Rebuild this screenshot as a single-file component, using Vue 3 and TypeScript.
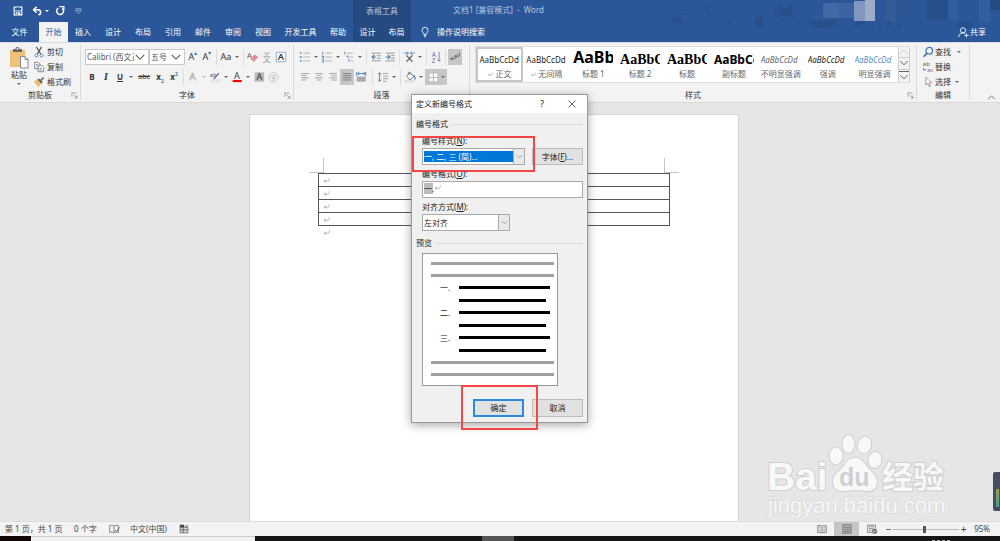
<script setup lang="ts">
import { h, ref } from 'vue'

const art: Record<string, string> = {
  save: '<path d="M2.500 2.500h9v9h-9z" fill="none" stroke="#fff" stroke-width="1.300"/><path d="M4 3h6v3.500H4z" fill="#2b579a"/><path d="M3 6.800h8" stroke="#fff"/><path d="M4.500 8.500h5v3h-5z" fill="#fff"/><path d="M5.500 9.500h1.500v2H5.500z" fill="#2b579a"/>',
  undo: '<path d="M6.500 2L3 5.500 6.500 9" fill="none" stroke="#fff" stroke-width="1.800"/><path d="M3 5.500h5c4 0 4.500 5.500.500 6" fill="none" stroke="#fff" stroke-width="1.800"/>',
  redo: '<path d="M5 3.600a4 4 0 1 0 4.600.300" fill="none" stroke="#fff" stroke-width="1.700"/><path d="M6.500 2h5v4.500" fill="none" stroke="#fff" stroke-width="1.500"/>',
  custom: '<path d="M4 4.500h7" stroke="#a8bbd8"/><path d="M4 6.500h7L7.500 10z" fill="none" stroke="#a8bbd8" stroke-width=".8"/>',
  bulb: '<path d="M5.300 9.500C5.300 8 3.500 7.300 3.500 5a3.500 3.500 0 0 1 7 0c0 2.300-1.800 3-1.800 4.500zM5.500 11h3M6 12.500h2" fill="none" stroke="#fff"/>',
  user: '<circle cx="7" cy="5" r="3" fill="none" stroke="#fff"/><path d="M2 13c0-3 2-5 5-5 1 0 1.800.200 2.500.600M8.500 11h5M11 8.500v5" fill="none" stroke="#fff"/>',
  cut: '<path d="M4 1l5 8.500M10 1L5 9.500" stroke="#555" stroke-width="1.300"/><circle cx="4" cy="11" r="1.800" fill="none" stroke="#4a83bd"/><circle cx="10" cy="11" r="1.800" fill="none" stroke="#4a83bd"/>',
  copy: '<path d="M2 1.500h4l2 2V9H2z" fill="#fff" stroke="#777"/><path d="M6 5h4l2.500 2.500v5H6z" fill="#fff" stroke="#777"/><path d="M3.500 4h2M3.500 6h2M7.500 8.500h3M7.500 10.500h3" stroke="#4a83bd"/>',
  brush: '<path d="M1 6l4-2 4.500 5L6 13z" fill="#edba6c"/><path d="M5 4l2-1 4.500 4-2 2z" fill="#666"/><path d="M9 5l3.500-3" stroke="#666" stroke-width="2"/>',
  eraser: '<text x="0" y="8" font-size="9" fill="#555">A</text><path d="M4 9l5-5 4 3-5 5.500z" fill="#e77f91"/><path d="M4 9l2-2 4 3.300-2 2.200z" fill="#d99"/>',
  pinyin: '<path d="M4 1.500l1.500 2.500 1.500-2.500 1.500 2.500L10 1.500" fill="none" stroke="#999" stroke-width=".8"/><text x="2" y="12.500" font-size="9.500" fill="#999">文</text>',
  boxa: '<path d="M1.500 1.500h11v11h-11z" fill="#fff" stroke="#7fa3cf"/><text x="3.200" y="11" font-size="11" font-weight="600" fill="#333">A</text>',
  outline: '<text x="3" y="11" font-size="11" fill="#fff" stroke="#b5b5b5" stroke-width=".8">A</text>',
  marker: '<text x="1" y="6.500" font-size="7" fill="#555">ab</text><path d="M5 9l6-7 1 1-6 7z" fill="#666"/><path d="M2 10.500h10v2H2z" fill="#fff" stroke="#bbb" stroke-width=".6"/>',
  color: '<text x="3.500" y="9" font-size="10.500" fill="#444">A</text><path d="M2 10.500h10.500V13H2z" fill="#f00"/>',
  shadea: '<path d="M2 1.500h11v11H2z" fill="#b8b8b8"/><text x="4" y="11" font-size="10.500" fill="#333">A</text>',
  circle: '<circle cx="7.500" cy="7.500" r="5.500" fill="none" stroke="#c8bcc8"/><text x="4.300" y="10" font-size="6.500" fill="#b9aeb9">字</text>',
  bullets: '<path d="M1 2.500h2M1 7h2M1 11.500h2" stroke="#3c78b5" stroke-width="1.600"/><path d="M5 2.500h8M5 7h8M5 11.500h8" stroke="#aaa"/>',
  numbers: '<path d="M2 1v3M1 6h2v2H1M1 10h2v3H1" fill="none" stroke="#3c78b5"/><path d="M5 2.500h8M5 7h8M5 11.500h8" stroke="#aaa"/>',
  multi: '<path d="M2 1v3M4 6h2v2M7 9.500v3" fill="none" stroke="#3c78b5"/><path d="M4.500 2.500H12M8 7h4M9 11.500h3" stroke="#aaa"/>',
  outdent: '<path d="M2 2.500h10.500M8 5.500h4.500M8 8.500h4.500M2 11.500h10.500" stroke="#888"/><path d="M7 7H3M5 4.500L2.500 7 5 9.500" fill="none" stroke="#3c78b5" stroke-width="1.200"/>',
  indent: '<path d="M2 2.500h10.500M8 5.500h4.500M8 8.500h4.500M2 11.500h10.500" stroke="#888"/><path d="M2 7h4M4.500 4.500L7 7 4.500 9.500" fill="none" stroke="#3c78b5" stroke-width="1.200"/>',
  asian: '<path d="M4 5l7 7.500M11 5l-7 7.500" fill="none" stroke="#555" stroke-width="1.400"/><path d="M1 2.500h5M9 2.500h5M4.500 .8L6.500 2.500 4.500 4.200M10.500 .8l-2 1.700 2 1.700" fill="none" stroke="#3c78b5"/>',
  sort: '<text x="2" y="6.500" font-size="7.500" fill="#3c78b5">A</text><text x="2" y="13.500" font-size="7.500" fill="#8a53a8">Z</text><path d="M10.500 1v11M8.500 10l2 2 2-2" fill="none" stroke="#777"/>',
  marks: '<path d="M12 2v4H7M9 4L7 6l2 2M7 6.500v2.500H2M4 7L2 9l2 2" fill="none" stroke="#555"/>',
  left: '<path d="M2.500 3h9M2.500 5.500h6M2.500 8h9M2.500 10.500h6" stroke="#999"/>',
  center: '<path d="M2.500 3h9M4.500 5.500h5M2.500 8h9M4.500 10.500h5" stroke="#999"/>',
  right: '<path d="M2.500 3h9M5.500 5.500h6M2.500 8h9M5.500 10.500h6" stroke="#999"/>',
  justify: '<path d="M2 3h10M2 5.500h10M2 8h10M2 10.500h10" stroke="#777"/>',
  distrib: '<path d="M2 1v5M12.500 1v5M3 3h9M5 1.500L3 3l2 1.500M10 1.500L12 3l-2 1.500" fill="none" stroke="#3c78b5"/><path d="M2 6.500h10.500v6H2z" fill="#aaa"/>',
  spacing: '<path d="M3 2v10M1 4l2-2 2 2M1 10l2 2 2-2" fill="none" stroke="#3c78b5"/><path d="M7 3h6M7 6h6M7 9h6M7 12h4" stroke="#999"/>',
  bucket: '<path d="M3 6l4-4 4 4-4 4.500z" fill="#fff" stroke="#666"/><path d="M5 4V1.500h2V5" fill="none" stroke="#666" stroke-width=".8"/><path d="M11 5c2 2 2 4 1.500 5" stroke="#4a83bd" fill="none" stroke-width="1.500"/><path d="M1.500 11h10v2h-10z" fill="#fff" stroke="#bbb" stroke-width=".7"/>',
  border: '<path d="M2.500 2.500h10v10h-10z" fill="#fff" stroke="#aaa" stroke-width=".6"/><path d="M7.500 2.500v10M2.500 7.500h10" stroke="#aaa"/>',
  find: '<circle cx="8.500" cy="5.500" r="3.800" fill="none" stroke="#3c78b5" stroke-width="1.500"/><path d="M5.500 8.500L2 12.500" stroke="#3c78b5" stroke-width="2"/>',
  replace: '<text x="1" y="5.500" font-size="7" fill="#555">ab</text><text x="6" y="12.500" font-size="7" fill="#8a53a8">ac</text><path d="M2 8v2.500h3" fill="none" stroke="#3c78b5"/>',
  select: '<path d="M4.500 1.500v9l2.200-2 1.800 4 1.500-.700-1.700-3.800h3z" fill="#fff" stroke="#777" stroke-width=".8"/>',
  spell: '<path d="M2 3c2-.500 4-.500 5 .500 1-1 3-1 5-.500v8c-2-.500-4-.500-5 .500-1-1-3-1-5-.500zM7 3.500V11" fill="none" stroke="#777"/><path d="M8 8l2 2 3.500-5" stroke="#555" fill="none"/>',
  macro: '<path d="M2.500 5h9v6.500h-9z" fill="#ddd" stroke="#666"/><path d="M2 2h5v3H2z" fill="#444"/><path d="M8 3.500h4M2.500 8h9M6 5v6" stroke="#555"/>',
  read: '<path d="M2 3h4l1 1 1-1h4v8H8l-1 1-1-1H2zM7 4v8" fill="none" stroke="#777"/><path d="M3 5h2.500M3 7h2.500M3 9h2.500M8.500 5H11M8.500 7H11M8.500 9H11" stroke="#999"/>',
  print: '<path d="M2 2h10v10H2z" fill="#b0b0b0" stroke="#777"/><path d="M3.500 5h7M3.500 7.500h7M3.500 10h7" stroke="#777"/>',
  web: '<path d="M7 11H2V2.500h9V6" fill="none" stroke="#777"/><path d="M3.500 4.500h6M3.500 6.500h5M3.500 8.500h3" stroke="#888"/><circle cx="10" cy="9.500" r="3" fill="#777"/><path d="M8 9.500l2 1 2-2" fill="none" stroke="#fff" stroke-width=".7"/>',
  enter: '<path d="M11 3.500c2 3-1 4.500-3 4.500H3.500M6 5.500L3.500 8 6 10.500" fill="none" stroke="#888"/>',
  launch: '<path d="M3 9V3h7M6 6l4.500 4.500M11 7v4H7" fill="none" stroke="#777"/>',
  up: '<path d="M2 9.500l5-5 5 5" fill="none" stroke="currentColor" stroke-width="1.200"/>',
  down: '<path d="M2 4.500l5 5 5-5" fill="none" stroke="currentColor" stroke-width="1.200"/>',
  close: '<path d="M3 3l8 8M11 3l-8 8" stroke="#444"/>',
}
const Icon = (p: { name: string }) =>
  h('svg', { class: 'icon', viewBox: '0 0 14 14', 'aria-hidden': 'true', innerHTML: art[p.name] })
Icon.props = ['name']

const tabs = ['开始', '插入', '设计', '布局', '引用', '邮件', '审阅', '视图']
const active = ref('开始')
const styles = [
  { n: '正文', s: 'AaBbCcDd', k: 'plain', m: true },
  { n: '无间隔', s: 'AaBbCcDd', k: 'plain', m: true },
  { n: '标题 1', s: 'AaBb', k: 'h1' },
  { n: '标题 2', s: 'AaBbC', k: 'h2' },
  { n: '标题', s: 'AaBbC', k: 'h2' },
  { n: '副标题', s: 'AaBbCc', k: 'sub' },
  { n: '不明显强调', s: 'AaBbCcDd', k: 'subtle' },
  { n: '强调', s: 'AaBbCcDd', k: 'em' },
  { n: '明显强调', s: 'AaBbCcDd', k: 'azure' },
]
const preview = ['grey', 'grey', '一', 'short', '二', 'short', '三', 'short', 'grey', 'grey']
const format = ref('一.')
const zoom = ref(95)
</script>

<template>
  <div class="app">
    <header class="head">
      <svg class="deco" viewBox="0 0 340 42" aria-hidden="true">
        <g fill="#264d88" opacity=".75">
          <ellipse cx="17" cy="20" rx="5" ry="3" /><path d="M7 14l6 5M22 15l6-1M8 23l6-3M21 22l4 3" stroke="#264d88" />
          <circle cx="47" cy="7" r="2.500" /><circle cx="70" cy="22" r="1.800" />
          <path d="M95 25v-4a4.500 4.500 0 0 1 9 0v4l-2 3-1-3-1.500 4-1.500-4-2 3z" />
          <ellipse cx="125" cy="12" rx="7" ry="4" /><path d="M113 13l8-4M119 3l3 6M132 2l-3 7M136 13l-8-2M116 18l6-4M134 18l-5-4" stroke="#264d88" stroke-width="2" />
          <path d="M147 19q16 4 29 0 3 2-1 5-4 4-14 4-12-1-14-9z" /><path d="M194 23l14-5-4 6-10 3z" />
          <path d="M217 25l3-3 2 5zM226 22h4l-1 6zM236 22l6 4-3 2z" /><ellipse cx="305" cy="25" rx="9" ry="4" />
        </g>
        <path d="M163 3h15v15h-15z" fill="#4268a6" /><path d="M178 3h16v15h-16z" fill="#3c63a2" />
        <path d="M194 1h11v20h-11z" fill="#8296bf" /><path d="M205 0h10v21h-10z" fill="#9eacca" />
        <path d="M225 0h11v21h-11z" fill="#345c94" /><path d="M236 0h20v19h-20z" fill="#2d5694" /><path d="M267 0h21v20h-21z" fill="#274f8a" />
        <path d="M288 0h10v20h-10zM319 0h11v22h-11z" fill="#315e9f" /><path d="M330 0h10v10h-10z" fill="#254b82" />
      </svg>
      <div class="title-row">
        <div class="quick">
          <button aria-label="保存"><Icon name="save" /></button>
          <button aria-label="撤消"><Icon name="undo" /></button><i class="ar light"></i>
          <button aria-label="恢复"><Icon name="redo" /></button>
          <button class="more" aria-label="自定义"><Icon name="custom" /></button>
        </div>
        <div class="ctx-title">表格工具</div>
        <div class="doc-title">文档1 [兼容模式]&nbsp; -&nbsp; Word</div>
      </div>
      <nav class="tabs">
        <button class="file">文件</button>
        <button v-for="t in tabs" :key="t" :class="{ on: t === active }" @click="active = t">{{ t }}</button>
        <button class="dev">开发工具</button>
        <button>帮助</button>
        <div class="ctx"><button>设计</button><button>布局</button></div>
        <button class="tell"><Icon name="bulb" />操作说明搜索</button>
        <button class="share"><Icon name="user" />共享</button>
      </nav>
    </header>

    <section class="ribbon">
      <div class="group clip">
        <div class="body">
          <button class="paste">
            <svg viewBox="0 0 20 22" aria-hidden="true">
              <path d="M1 3h15v17H1z" fill="#edc178" /><path d="M4 2h2.500a2 2 0 0 1 4 0H13v3H4z" fill="#666" /><circle cx="8.500" cy="2" r=".9" fill="#fff" />
              <path d="M11.500 9.500h4.500l3 3v8.500h-7.500z" fill="#fff" stroke="#888" /><path d="M16 9.500v3h3" fill="none" stroke="#888" />
            </svg>
            <span>粘贴</span><i class="ar"></i>
          </button>
          <div class="list">
            <button><Icon name="cut" />剪切</button>
            <button><Icon name="copy" />复制</button>
            <button><Icon name="brush" />格式刷</button>
          </div>
        </div>
        <div class="cap">剪贴板<Icon name="launch" /></div>
      </div>

      <div class="group font">
        <div class="body rows">
          <div class="row">
            <label class="combo"><input value="Calibri (西文正文)" aria-label="字体" /><Icon name="down" /></label>
            <label class="combo size"><input value="五号" aria-label="字号" /><Icon name="down" /></label>
            <button class="b grow">A<sup>▴</sup></button><button class="b grow">A<sup>▾</sup></button><i class="sep"></i>
            <button class="b aa">Aa</button><i class="ar"></i><i class="sep"></i>
            <button class="b" aria-label="清除格式"><Icon name="eraser" /></button>
            <button class="b" aria-label="拼音指南"><Icon name="pinyin" /></button>
            <button class="b" aria-label="字符边框"><Icon name="boxa" /></button>
          </div>
          <div class="row">
            <button class="b"><b>B</b></button><button class="b serif"><b><em>I</em></b></button><button class="b"><b><u>U</u></b></button><i class="ar"></i>
            <button class="b abc"><s>abc</s></button>
            <button class="b x"><b>x<sub>2</sub></b></button><button class="b x"><b>x<sup>2</sup></b></button><i class="sep"></i>
            <button class="b" aria-label="文本效果"><Icon name="outline" /></button><i class="ar pale"></i>
            <button class="b" aria-label="突出显示"><Icon name="marker" /></button><i class="ar"></i>
            <button class="b" aria-label="字体颜色"><Icon name="color" /></button><i class="ar"></i>
            <button class="b" aria-label="字符底纹"><Icon name="shadea" /></button>
            <button class="b" aria-label="带圈字符"><Icon name="circle" /></button>
          </div>
        </div>
        <div class="cap">字体<Icon name="launch" /></div>
      </div>

      <div class="group para">
        <div class="body rows">
          <div class="row">
            <button class="b" aria-label="项目符号"><Icon name="bullets" /></button><i class="ar"></i>
            <button class="b" aria-label="编号"><Icon name="numbers" /></button><i class="ar"></i>
            <button class="b" aria-label="多级列表"><Icon name="multi" /></button><i class="ar"></i><i class="sep"></i>
            <button class="b" aria-label="减少缩进"><Icon name="outdent" /></button>
            <button class="b" aria-label="增加缩进"><Icon name="indent" /></button><i class="sep"></i>
            <button class="b" aria-label="中文版式"><Icon name="asian" /></button><i class="ar"></i><i class="sep"></i>
            <button class="b" aria-label="排序"><Icon name="sort" /></button><i class="sep"></i>
            <button class="b on" aria-label="显示编辑标记"><Icon name="marks" /></button>
          </div>
          <div class="row">
            <button class="b" aria-label="左对齐"><Icon name="left" /></button>
            <button class="b" aria-label="居中"><Icon name="center" /></button>
            <button class="b" aria-label="右对齐"><Icon name="right" /></button>
            <button class="b on" aria-label="两端对齐"><Icon name="justify" /></button>
            <button class="b" aria-label="分散对齐"><Icon name="distrib" /></button><i class="sep wide"></i>
            <button class="b" aria-label="行距"><Icon name="spacing" /></button><i class="ar"></i><i class="sep"></i>
            <button class="b" aria-label="底纹"><Icon name="bucket" /></button><i class="ar"></i>
            <button class="b on split" aria-label="边框"><Icon name="border" /><i class="ar"></i></button>
          </div>
        </div>
        <div class="cap">段落</div>
      </div>

      <div class="group styles">
        <div class="body">
          <div class="gallery">
            <button v-for="(s, i) in styles" :key="s.n" class="style" :class="{ sel: i === 0 }">
              <span class="sample" :class="s.k">{{ s.s }}</span>
              <span class="name"><Icon v-if="s.m" name="enter" />{{ s.n }}</span>
            </button>
            <div class="scroll">
              <button class="dim" aria-label="上一行"><Icon name="up" /></button>
              <button aria-label="下一行"><Icon name="down" /></button>
              <button class="all" aria-label="其他"><Icon name="down" /></button>
            </div>
          </div>
        </div>
        <div class="cap">样式<Icon name="launch" /></div>
      </div>

      <div class="group edit">
        <div class="body list">
          <button><Icon name="find" />查找<i class="ar far"></i></button>
          <button><Icon name="replace" />替换</button>
          <button><Icon name="select" />选择<i class="ar"></i></button>
        </div>
        <div class="cap">编辑</div>
      </div>
      <button class="collapse" aria-label="折叠功能区"><Icon name="up" /></button>
    </section>

    <main class="work">
      <article class="page">
        <div class="crops"><i></i><i></i></div>
        <table>
          <tbody><tr v-for="r in 4" :key="r"><td><Icon name="enter" /></td></tr></tbody>
        </table>
        <Icon name="enter" class="tail" />
      </article>
      <svg class="mark" viewBox="0 0 195 90" role="img" aria-label="Baidu 经验">
        <g fill="#f8f8f8" stroke="#cfcfcf" stroke-width="2" paint-order="stroke">
          <text x="7" y="60" class="bai">Bai</text>
          <ellipse cx="76" cy="26" rx="6.500" ry="8.500" /><ellipse cx="88.500" cy="14" rx="6" ry="9" />
          <ellipse cx="104.500" cy="15" rx="6.500" ry="8.500" transform="rotate(12 104.500 15)" /><ellipse cx="115" cy="30" rx="6.500" ry="8" transform="rotate(8 115 30)" />
          <path d="M95 28c8 0 10 7 14 11s8 7 8 13c0 7-5 9-10 9-5 0-7-1-12-1s-7 1-12 1c-6 0-10-3-10-9 0-7 5-10 9-14s5-10 13-10z" />
          <text x="122" y="58" class="jy">经验</text>
          <text x="8" y="83" class="url">jingyan.baidu.com</text>
        </g>
        <text x="79" y="56" class="du">du</text>
      </svg>
      <aside class="meter"><i></i></aside>
    </main>

    <footer class="status">
      <span class="pages">第 1 页，共 1 页</span><span class="words">0 个字</span>
      <Icon name="spell" /><span class="lang">中文(中国)</span><Icon name="macro" />
      <div class="views">
        <button aria-label="阅读视图"><Icon name="read" /></button>
        <button class="on" aria-label="页面视图"><Icon name="print" /></button>
        <button aria-label="Web 版式"><Icon name="web" /></button>
        <button class="pm">−</button>
        <input v-model="zoom" type="range" min="10" max="190" aria-label="缩放" />
        <button class="pm">+</button><span class="pct">{{ zoom }}%</span>
      </div>
    </footer>
    <div class="task"><i class="start"></i><i class="search"></i><i class="apps"></i><i class="cur"></i><i class="tray"></i></div>

    <form class="dialog" role="dialog" aria-labelledby="dlg" @submit.prevent>
      <div class="bar"><span id="dlg">定义新编号格式</span><button type="button" class="help">?</button><button type="button" aria-label="关闭"><Icon name="close" /></button></div>
      <div class="content">
        <div class="legend">编号格式</div>
        <label class="clipped first" for="ns"><span>编号样式(<u>N</u>):</span></label>
        <div class="line">
          <div class="pick blue"><select id="ns"><option>一, 二, 三 (简)...</option></select><span><Icon name="down" /></span></div>
          <button type="button" class="btn">字体(<u>F</u>)...</button>
        </div>
        <label class="clipped" for="nf"><span>编号格式(<u>O</u>):</span></label>
        <div class="field"><input id="nf" v-model="format" /><Icon name="enter" /></div>
        <label class="whole" for="al">对齐方式(<u>M</u>):</label>
        <div class="pick small"><select id="al"><option>左对齐</option></select><span><Icon name="down" /></span></div>
        <div class="legend second">预览</div>
        <div class="preview">
          <div v-for="(p, i) in preview" :key="i" class="pl" :class="p.length > 1 ? p : 'item'">
            <span v-if="p.length === 1">{{ p }}.</span><i></i>
          </div>
        </div>
        <div class="actions"><button class="btn ok">确定</button><button type="button" class="btn">取消</button></div>
      </div>
      <i class="ring top"></i><i class="ring bottom"></i>
    </form>
  </div>
</template>

<style>
html, body { margin: 0; }
</style>

<style scoped>
* { box-sizing: border-box; }
.app { position: relative; display: flex; flex-direction: column; min-height: 100vh; overflow: hidden; font: 8px/12px "Noto Sans", "Noto Sans CJK SC", sans-serif; color: #333; background: #e6e6e6; }
button, input, select { font: inherit; color: inherit; border: 0; padding: 0; margin: 0; background: none; border-radius: 0; min-width: 0; outline: 0; }
button { display: flex; align-items: center; justify-content: center; white-space: nowrap; }
.icon { display: block; width: 12px; height: 12px; flex: none; overflow: visible; }
.ar { width: 8px; flex: none; display: flex; justify-content: center; }
.ar::before { content: ""; border: 2px solid transparent; border-top-color: #666; border-bottom: 0; }
.light::before { border-top-color: #fff; }
.pale::before { border-top-color: #bbb; }

.head { position: relative; background: #2b579a; color: #fff; }
.deco { position: absolute; right: 0; top: 0; width: 340px; height: 42px; }
.title-row { display: flex; height: 22px; align-items: stretch; }
.quick { width: 353px; display: flex; align-items: center; padding-left: 12px; }
.quick button:nth-child(2) { margin-left: 7px; }
.quick .more { margin-left: 6px; }
.quick .ar + button { margin-left: 3px; }
.ctx-title { width: 58px; background: #254a80; color: #b5c4dc; display: flex; align-items: center; justify-content: center; }
.doc-title { margin-left: 42px; padding-top: 4px; color: #b5c4dc; }
.tabs { position: relative; display: flex; height: 20px; }
.tabs button { width: 30px; }
.tabs .file { width: 39px; }
.tabs .on { width: 29px; background: #f3f3f3; color: #2b579a; }
.tabs .dev { width: 45px; }
.ctx { display: flex; background: #254a80; }
.tabs .ctx button { width: 29px; }
.tabs .tell { width: auto; margin-left: 8px; gap: 6px; }
.tabs .share { width: auto; margin-left: auto; margin-right: 14px; gap: 1px; }

.ribbon { display: flex; height: 61px; background: #f3f3f3; border-top: 1px solid #d3dbe8; border-bottom: 1px solid #d8d8d8; position: relative; }
.group { position: relative; display: flex; flex-direction: column; flex: none; margin: 2px 0; border-right: 1px solid #dadada; }
.body { flex: 1; display: flex; min-height: 0; }
.cap { height: 11px; line-height: 11px; text-align: center; position: relative; flex: none; }
.cap .icon { position: absolute; right: 1px; top: 2px; width: 9px; height: 9px; }
.clip { width: 81px; }
.font { width: 213px; }
.para { width: 176px; }
.styles { width: 447px; }
.edit { width: 53px; }
.paste { flex-direction: column; width: 36px; padding-left: 2px; justify-content: flex-start; padding-top: 2px; }
.paste svg { width: 20px; height: 22px; flex: none; }
.paste .ar { margin-top: 2px; }
.list { display: flex; flex-direction: column; justify-content: flex-start; }
.list button { height: 15px; gap: 2px; justify-content: flex-start; }
.clip .list { margin-left: -3px; }
.edit .list { padding-left: 5px; }
.edit .list .icon { margin-right: -1px; }
.far { margin-left: 2px; }
.rows { flex-direction: column; padding: 4px 4px 0; gap: 4px; }
.row { display: flex; height: 16px; align-items: stretch; }
.row .ar { align-items: center; }
.b { width: 14px; flex: none; }
.on { background: #c6c6c6; }
.split { width: 22px; }
.split .icon { margin-left: 1px; }
.sep { width: 1px; margin: 0 2px; background: #ddd; flex: none; }
.wide { margin: 0 3px 0 4px; }
.grow { font-size: 9px; }
.grow sup { font-size: 6px; color: #3c78b5; line-height: 0; margin-top: -8px; }
.aa { font-size: 9px; }
.serif { font-family: "Liberation Serif", serif; font-size: 10px; }
.abc { width: 18px; font-size: 7px; }
.x sub, .x sup { font-size: 5px; color: #3c78b5; line-height: 0; }
.combo { display: flex; align-items: center; width: 64px; border: 1px solid #c8c8c8; background: #fff; color: #555; padding: 0 2px 0 1px; margin: 0; }
.combo input { flex: 1; width: 0; }
.size { width: 36px; margin-right: 1px; }
.styles .body { padding: 1px 6px 6px 5px; }
.gallery { display: flex; flex: 1; background: #fff; border: 1px solid #ddd; border-right: 0; }
.style { flex: 1 1 0; flex-direction: column; justify-content: space-between; overflow: hidden; padding: 0 3px 2px; }
.sel { border: 2px solid #c6c6c6; padding: 0 1px; }
.sample { height: 23px; line-height: 26px; width: 40px; overflow: hidden; text-align: left; color: #222; }
.sel .sample { line-height: 22px; height: 21px; }
.h1 { font-size: 16px; line-height: 20px; font-weight: 700; color: #000; }
.h2 { font: 700 14px/25px "Liberation Serif", serif; color: #000; }
.sub { font-size: 12px; line-height: 25px; font-weight: 700; color: #000; }
.subtle, .em, .azure { font-style: italic; }
.subtle { color: #666; }
.azure { color: #5b8bc9; }
.name { display: flex; align-items: center; gap: 1px; color: #666; line-height: 12px; }
.name .icon { width: 7px; height: 7px; }
.scroll { width: 12px; display: flex; flex-direction: column; background: #f3f3f3; border: 1px solid #ccc; border-width: 0 1px; }
.scroll button { flex: 1; border-bottom: 1px solid #ccc; color: #444; }
.scroll .icon { width: 10px; height: 10px; }
.scroll .all { border-top: 1px solid #666; border-bottom: 0; margin-top: 1px; }
.scroll .dim { color: #bbb; }
.collapse { margin: auto 4px 0 auto; height: 10px; color: #555; }
.collapse .icon { width: 9px; height: 9px; }

.work { position: relative; flex: 1; display: flex; justify-content: center; padding: 11px 12px 0 0; }
.page { width: 490px; background: #fff; border: 1px solid #d6d6d6; border-bottom: 0; padding: 43px 59px 0 59px; }
.crops { display: flex; justify-content: space-between; height: 15px; }
.crops i { width: 15px; border: 0 solid #c4c4c4; border-bottom-width: 1px; border-right-width: 1px; }
.crops i + i { border-right-width: 0; border-left-width: 1px; }
table { border-collapse: collapse; width: calc(100% - 18px); margin: 0 9px; }
td { height: 13px; padding: 0 3px; border: 1px solid #555; }
td .icon, .tail { width: 9px; height: 9px; }
.tail { margin: 2px 0 0 13px; }
.mark { position: absolute; right: 45px; bottom: 1px; width: 195px; height: 90px; }
.bai { font: 700 39px "Liberation Sans", sans-serif; }
.jy { font: 700 31px "Noto Sans CJK SC", sans-serif; }
.url { font: 22px "Liberation Sans", sans-serif; stroke: #d4d4d4; stroke-width: 1px; }
.du { font: 700 25px "Liberation Sans", sans-serif; fill: #d0d0d0; }
.meter { position: absolute; right: 0; bottom: 10px; width: 7px; height: 39px; background: #484c60; border-radius: 2px 0 0 2px; padding: 17px 1px 4px 3px; display: flex; }
.meter i { flex: 1; background: linear-gradient(#98a050, #3e9d8c); }

.status { display: flex; align-items: center; height: 15px; background: #f3f3f3; border-top: 1px solid #ddd; padding-left: 5px; color: #444; }
.pages { width: 69px; }
.words { width: 34px; }
.lang { margin: 0 11px 0 10px; }
.views { display: flex; align-self: stretch; align-items: center; margin-left: auto; padding-right: 10px; }
.views button { width: 25px; align-self: stretch; }
.views .pm { width: 9px; font-size: 10px; }
.views input { appearance: none; width: 66px; height: 7px; background: linear-gradient(#bbb, #bbb) center / 100% 1px no-repeat; }
.views input::-webkit-slider-thumb { appearance: none; width: 3px; height: 7px; background: #555; }
.pct { margin-left: 6px; }
.task { display: flex; height: 5px; background: #161616; }
.start { width: 31px; background: #140606; }
.search { width: 224px; background: #f2f2f2; border-top: 1px solid #ccc; }
.apps { width: 227px; }
.cur { width: 32px; background: #555; }
.tray { width: 20px; height: 1px; align-self: flex-end; margin: 0 48px 0 auto; background: repeating-linear-gradient(90deg, #aaa 0 3px, #161616 3px 5px); }

.dialog { position: absolute; left: 411px; top: 94px; width: 177px; background: #f0f0f0; border: 1px solid #999; box-shadow: 0 2px 9px rgba(0, 0, 0, .35); color: #222; }
.bar { display: flex; align-items: center; height: 18px; background: #fff; padding-left: 4px; }
.bar span { flex: 1; }
.bar button { width: 30px; }
.bar .help { font-size: 9px; }
.content { padding: 5px 4px 5px 5px; }
.legend { display: flex; align-items: center; gap: 3px; height: 12px; margin-left: -1px; }
.legend::after { content: ""; flex: 1; height: 1px; background: #ddd; }
.second { margin: 6px 0 4px -1px; }
.clipped { display: flex; align-items: flex-end; height: 8px; margin: 6px 5px 2px; overflow: hidden; }
.first { margin-top: 8px; }
.clipped span { flex: none; margin-bottom: -1px; }
.line { display: flex; justify-content: space-between; margin-left: 5px; }
.pick { position: relative; height: 17px; width: 103px; }
.pick select { appearance: none; display: block; width: 100%; height: 100%; border: 1px solid #aaa; padding: 0 12px 0 1px; background: #fff; }
.pick.blue select { padding: 2px 11px 2px 1px; color: #fff; background: linear-gradient(#0078d7, #0078d7) content-box, #fff; line-height: 11px; }
.pick span { position: absolute; right: 0; top: 0; width: 12px; height: 17px; border: 1px solid #aaa; background: #e9e9e9; display: flex; align-items: center; justify-content: center; pointer-events: none; color: #666; }
.pick span .icon { width: 7px; height: 7px; }
.pick.small { width: 88px; margin-left: 5px; }
.btn { width: 51px; height: 18px; background: #e1e1e1; border: 1px solid #bcbcbc; }
.line .btn { height: 17px; }
.ok { border: 2px solid #2a8adf; }
.field { position: relative; margin-left: 5px; height: 17px; }
.field input { display: block; width: 100%; height: 100%; padding: 0 1px 3px; border: 1px solid #aaa; background: linear-gradient(#bbb, #bbb) 1px 1px / 9px 11px no-repeat, #fff; }
.field .icon { position: absolute; left: 11px; top: 2px; width: 9px; height: 9px; }
.whole { display: block; height: 11px; line-height: 11px; margin: 3px 5px 2px; }
.preview { display: flex; flex-direction: column; justify-content: space-between; width: 136px; height: 133px; margin-left: 5px; padding: 7px 3px 8px 8px; background: #fff; border: 1px solid #999; }
.pl { display: flex; align-items: center; height: 4px; }
.pl i { height: 3px; flex: 1; background: #000; }
.grey i { background: #a0a0a0; }
.item { padding: 0 4px 0 9px; }
.item span { width: 19px; }
.short { padding: 0 8px 0 28px; }
.actions { display: flex; justify-content: flex-end; gap: 8px; margin-top: 13px; }
.ring { position: absolute; border: 2px solid #f54545; pointer-events: none; }
.ring.top { left: 0; top: 41px; width: 123px; height: 36px; }
.ring.bottom { left: 49px; top: 290px; width: 77px; height: 45px; }
</style>
